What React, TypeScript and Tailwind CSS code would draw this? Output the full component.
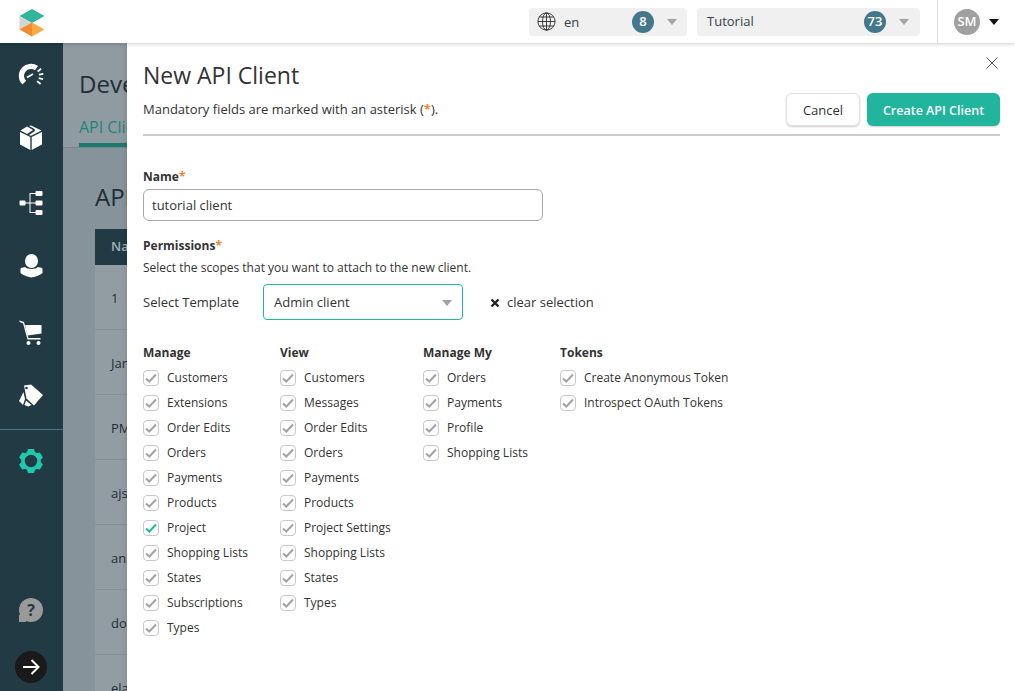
const columns = [
  {
    title: "Manage",
    width: "w-[137px]",
    items: ["Customers", "Extensions", "Order Edits", "Orders", "Payments", "Products", "Project", "Shopping Lists", "States", "Subscriptions", "Types"],
  },
  {
    title: "View",
    width: "w-[143px]",
    items: ["Customers", "Messages", "Order Edits", "Orders", "Payments", "Products", "Project Settings", "Shopping Lists", "States", "Types"],
  },
  {
    title: "Manage My",
    width: "w-[137px]",
    items: ["Orders", "Payments", "Profile", "Shopping Lists"],
  },
  {
    title: "Tokens",
    width: "w-[200px]",
    items: ["Create Anonymous Token", "Introspect OAuth Tokens"],
  },
]

const rows = ["1", "Jan", "PM", "ajs", "an", "do", "ela"]

function Logo() {
  return (
    <svg width="27" height="30" viewBox="0 0 27 30">
      <polygon points="0.5,9 13,2 25.5,9 13,16" fill="#2fb59a" />
      <polygon points="0.5,9 13,16 0.5,23" fill="#d4d4d4" />
      <polygon points="13,16 0.5,23 13,30" fill="#f28a30" transform="translate(0,-0.5)" />
      <polygon points="13,16 25.5,23 13,30" fill="#fbab45" transform="translate(0,-0.5)" />
    </svg>
  )
}

function Gauge() {
  return (
    <svg width="26" height="24" viewBox="0 0 26 24" fill="none" stroke="white">
      <path d="M6.3 19.7 A9.5 9.5 0 0 1 18.5 5.2" strokeWidth="5.2" />
      <path
        d="M19.6 8.4 L23.2 5.8 M20.9 11.6 L25.3 10.8 M20.7 15.1 L25 16.2 M19.1 18.1 L22.6 21"
        strokeWidth="1.8"
      />
      <path d="M9 14.5 L15 11" strokeWidth="1.8" />
    </svg>
  )
}

function Box() {
  return (
    <svg width="24" height="26" viewBox="0 0 24 26" fill="white">
      <path d="M1 7 L11.3 12 V25 L1 19.5Z" />
      <path d="M23 7 L12.7 12 V25 L23 19.5Z" />
      <path d="M1.5 5.5 L8 1.5 L14 5 L8 9Z" />
      <path d="M10 10 L16 6 L15.5 4 L10 1 L12 0.5 L22.5 5.5 L12 10.8Z" />
    </svg>
  )
}

function Tree() {
  return (
    <svg width="24" height="26" viewBox="0 0 24 26" fill="white">
      <rect x="0.5" y="10.5" width="6" height="5" rx="1" />
      <rect x="16.5" y="1" width="7" height="5" rx="1" />
      <rect x="16.5" y="10.5" width="7" height="5" rx="1" />
      <rect x="16.5" y="20" width="7" height="5" rx="1" />
      <path d="M6 12.5 H17 V13.5 H6Z M10.5 3 H17 V4 H11.5 V22 H17 V23 H10.5Z" />
    </svg>
  )
}

function Person() {
  return (
    <svg width="23" height="24" viewBox="0 0 23 24" fill="white">
      <ellipse cx="11.5" cy="7" rx="6.5" ry="7" />
      <path d="M0.5 15 C0.5 14 2 13.5 5 13 C7 15.5 16 15.5 18 13 C21 13.5 22.5 14 22.5 15 V19 C20 21 16 23 11.5 23.5 C7 23 3 21 0.5 19Z" />
    </svg>
  )
}

function Cart() {
  return (
    <svg width="24" height="25" viewBox="0 0 24 25" fill="white">
      <path d="M0.5 0.5 L5 2 L9.5 18 H21.5 V19.5 H8.5 L4 3.3 L0.5 2Z" />
      <path d="M6 5 H22.5 V13.5 L8.5 15.5Z" />
      <circle cx="9.5" cy="23" r="2" />
      <circle cx="19.5" cy="23" r="2" />
    </svg>
  )
}

function Tags() {
  return (
    <svg width="25" height="23" viewBox="0 0 25 23" fill="white">
      <path d="M5 1.5 L12 0.5 L24 11 L15 21.5 L7.5 14.5 Z" />
      <path d="M4.5 8 L6 15 L4 21 L0 17Z" />
      <path d="M7 16.5 L12.5 21 L9 22.5 L5.5 21Z" />
      <circle cx="7.5" cy="4" r="1.3" fill="#213a44" />
    </svg>
  )
}

function Gear() {
  return (
    <svg width="24" height="24" viewBox="0 0 24 24" fill="#1fc8ad">
      <circle cx="12" cy="12" r="8" fill="none" stroke="#1fc8ad" strokeWidth="3.6" />
      {[0, 60, 120, 180, 240, 300].map((deg) => (
        <path key={deg} d="M9 0 H15 L16.5 5 H7.5Z" transform={`rotate(${deg} 12 12)`} />
      ))}
    </svg>
  )
}

function Globe() {
  return (
    <svg width="19" height="19" viewBox="0 0 19 19" fill="none" stroke="#2b2b2b" strokeWidth="0.9">
      <circle cx="9.5" cy="9.5" r="8.6" />
      <ellipse cx="9.5" cy="9.5" rx="4" ry="8.6" />
      <path d="M9.5 1 V18 M1 9.5 H18 M2.2 5 H16.8 M2.2 14 H16.8" />
    </svg>
  )
}

function Caret({ color = "#a3a3a3" }: { color?: string }) {
  return (
    <svg width="10" height="6" viewBox="0 0 10 6">
      <polygon points="0,0 10,0 5,6" fill={color} />
    </svg>
  )
}

function Badge({ value }: { value: string }) {
  return (
    <span className="flex h-[22px] w-[22px] items-center justify-center rounded-full bg-[#43788c] text-[13px] font-semibold text-white">
      {value}
    </span>
  )
}

function Check({ active }: { active?: boolean }) {
  return (
    <span className="flex h-4 w-4 shrink-0 items-center justify-center rounded-[4px] border border-[#c9c9c9] bg-white">
      <svg width="12" height="10" viewBox="0 0 12 10" fill="none">
        <path d="M1 5.5 L4.3 8.5 L11 1.5" stroke={active ? "#1fb89c" : "#a3a3a3"} strokeWidth="2" />
      </svg>
    </span>
  )
}

function Asterisk() {
  return <span className="font-bold text-[#f5812a]">*</span>
}

function NavItem({ children, h }: { children: React.ReactNode; h: string }) {
  return <div className={`flex w-[62px] items-center justify-center ${h}`}>{children}</div>
}

export default function App() {
  return (
    <div className="relative flex h-[691px] w-[1015px] flex-col overflow-hidden bg-white font-['Open_Sans',sans-serif] text-[13px] text-[#333]">
      <header className="relative z-20 flex h-[43px] shrink-0 items-center bg-white shadow-[0_1px_4px_rgba(0,0,0,0.2)]">
        <div className="ml-[19px]">
          <Logo />
        </div>
        <div className="ml-auto flex h-[28px] w-[158px] items-center rounded-[4px] bg-[#f0f0f0] pl-2 pr-[10px]">
          <Globe />
          <span className="ml-[8px] pt-[2px] text-[13px] text-[#33424a]">en</span>
          <span className="ml-auto mr-[13px]">
            <Badge value="8" />
          </span>
          <Caret />
        </div>
        <div className="ml-[10px] flex h-[28px] w-[223px] items-center rounded-[4px] bg-[#f0f0f0] pl-[10px] pr-[11px]">
          <span className="text-[13px] text-[#33424a]">Tutorial</span>
          <span className="ml-auto mr-[13px]">
            <Badge value="73" />
          </span>
          <Caret />
        </div>
        <div className="ml-[17px] flex h-[43px] w-[78px] items-center border-l border-[#dcdcdc] pl-[16px]">
          <span className="flex h-[26px] w-[26px] items-center justify-center rounded-full bg-[#a0a0a0] text-[13px] font-semibold text-white">
            SM
          </span>
          <span className="ml-[9px]">
            <Caret color="#111" />
          </span>
        </div>
      </header>

      <div className="flex min-h-0 flex-1">
        <nav className="flex w-[63px] shrink-0 flex-col bg-[#213a44]">
          <NavItem h="mt-[20px] h-[24px]"><Gauge /></NavItem>
          <NavItem h="mt-[38px] h-[26px]"><Box /></NavItem>
          <NavItem h="mt-[39px] h-[26px]"><Tree /></NavItem>
          <NavItem h="mt-[38px] h-[24px]"><Person /></NavItem>
          <NavItem h="mt-[42px] h-[25px]"><Cart /></NavItem>
          <NavItem h="mt-[39px] h-[23px]"><Tags /></NavItem>
          <div className="mt-[22px] h-px bg-[#3e7a8c]" />
          <NavItem h="mt-[19px] h-[24px]"><Gear /></NavItem>
          <div className="mt-auto flex w-[62px] flex-col items-center pb-[8px]">
            <span className="relative flex h-6 w-6 items-center justify-center rounded-full bg-[#9a9a9a] text-[16px] font-bold text-[#213a44]">
              ?
              <span className="absolute bottom-0 left-0 h-[7px] w-[7px] bg-[#9a9a9a]" />
            </span>
            <span className="mt-[29px] flex h-8 w-8 items-center justify-center rounded-full bg-[#1a1a1a]">
              <svg width="18" height="18" viewBox="0 0 18 18" fill="none" stroke="white" strokeWidth="2">
                <path d="M1 9 H16 M9.5 2 L16.5 9 L9.5 16" />
              </svg>
            </span>
          </div>
        </nav>

        <main className="min-w-0 flex-1 overflow-hidden bg-[#86939a]">
          <div className="border-b border-[#79868d] bg-[#8f9ba1] pl-[16px] pt-[26px]">
            <h1 className="whitespace-nowrap text-[24px] leading-[30px] text-[#1e2f38]">Developer Settings</h1>
            <div className="mt-[16px] w-fit whitespace-nowrap border-b-4 border-[#1b7a6e] pb-[4px] text-[16px] leading-[24px] text-[#1d8577]">
              API Clients
            </div>
          </div>
          <div className="pl-[32px] pt-[34px]">
            <h2 className="whitespace-nowrap text-[24px] leading-[30px] text-[#1e2f38]">API Clients</h2>
            <div className="mt-[17px] flex h-[36px] items-center bg-[#213a44] pl-[16px] text-[13px] font-semibold text-[#a3b0b6]">
              Name
            </div>
            {rows.map((row) => (
              <div
                key={row}
                className="flex h-[65px] items-center border-b border-[#84919a] bg-[#929da3] pl-[16px] pt-[3px] text-[13px] text-[#1e2f38]"
              >
                {row}
              </div>
            ))}
          </div>
        </main>
      </div>

      <aside className="absolute bottom-0 left-[127px] right-0 top-[43px] z-10 bg-white pl-[16px] pr-[15px] shadow-[0_0_6px_rgba(0,0,0,0.15)]">
        <button className="absolute right-[11px] top-[8px] text-[#555]">
          <svg width="24" height="24" viewBox="0 0 24 24" fill="none" stroke="currentColor" strokeWidth="1">
            <path d="M6.5 6.5 L17.5 17.5 M17.5 6.5 L6.5 17.5" />
          </svg>
        </button>
        <div className="flex h-[93px] items-end justify-between border-b-2 border-[#cccccc] pb-[8px]">
          <div>
            <h2 className="text-[23px] leading-[33px] text-[#333]">New API Client</h2>
            <p className="mt-[8px] pb-[8px] text-[13px] leading-[18px]">
              Mandatory fields are marked with an asterisk (<Asterisk />).
            </p>
          </div>
          <div className="flex gap-[7px]">
            <button className="h-[33px] w-[74px] rounded-[6px] border border-[#e2e2e2] bg-white pt-[2px] text-[13px] text-[#333] shadow-[0_1px_2px_rgba(0,0,0,0.2)]">
              Cancel
            </button>
            <button className="h-[33px] w-[133px] rounded-[6px] bg-[#20b59c] pt-[3px] text-[12.5px] font-semibold text-white shadow-[0_1px_2px_rgba(0,0,0,0.2)]">
              Create API Client
            </button>
          </div>
        </div>

        <label className="mt-[32px] block text-[12px] font-bold leading-[18px]">
          Name<Asterisk />
        </label>
        <div className="mt-[3px] flex h-[32px] w-[400px] items-center rounded-[6px] border border-[#a8a8a8] px-2 pt-px text-[13px]">
          tutorial client
        </div>

        <div className="mt-[16px] text-[12px] font-bold leading-[18px]">
          Permissions<Asterisk />
        </div>
        <p className="mt-[4px] text-[12px] leading-[18px]">Select the scopes that you want to attach to the new client.</p>

        <div className="mt-[7px] flex h-[36px] items-center">
          <span className="w-[120px] pt-px text-[13px]">Select Template</span>
          <div className="flex h-[36px] w-[200px] items-center justify-between rounded-[4px] border border-[#1fb89c] pl-[10px] pr-[10px] pt-px">
            <span>Admin client</span>
            <Caret />
          </div>
          <span className="ml-[24px] flex items-center gap-[4px] pt-px text-[13px]">
            <svg width="16" height="16" viewBox="0 0 16 16" fill="none" stroke="#222" strokeWidth="2.4">
              <path d="M4.5 4.5 L11.5 11.5 M11.5 4.5 L4.5 11.5" />
            </svg>
            clear selection
          </span>
        </div>

        <div className="mt-[24px] flex">
          {columns.map((col) => (
            <div key={col.title} className={`shrink-0 ${col.width}`}>
              <div className="text-[12px] font-bold leading-[18px]">{col.title}</div>
              <ul className="mt-[3px] flex flex-col">
                {col.items.map((item) => (
                  <li key={item} className="flex h-[25px] items-center gap-[8px] whitespace-nowrap text-[12px]">
                    <Check active={col.title === "Manage" && item === "Project"} />
                    {item}
                  </li>
                ))}
              </ul>
            </div>
          ))}
        </div>
      </aside>
    </div>
  )
}
